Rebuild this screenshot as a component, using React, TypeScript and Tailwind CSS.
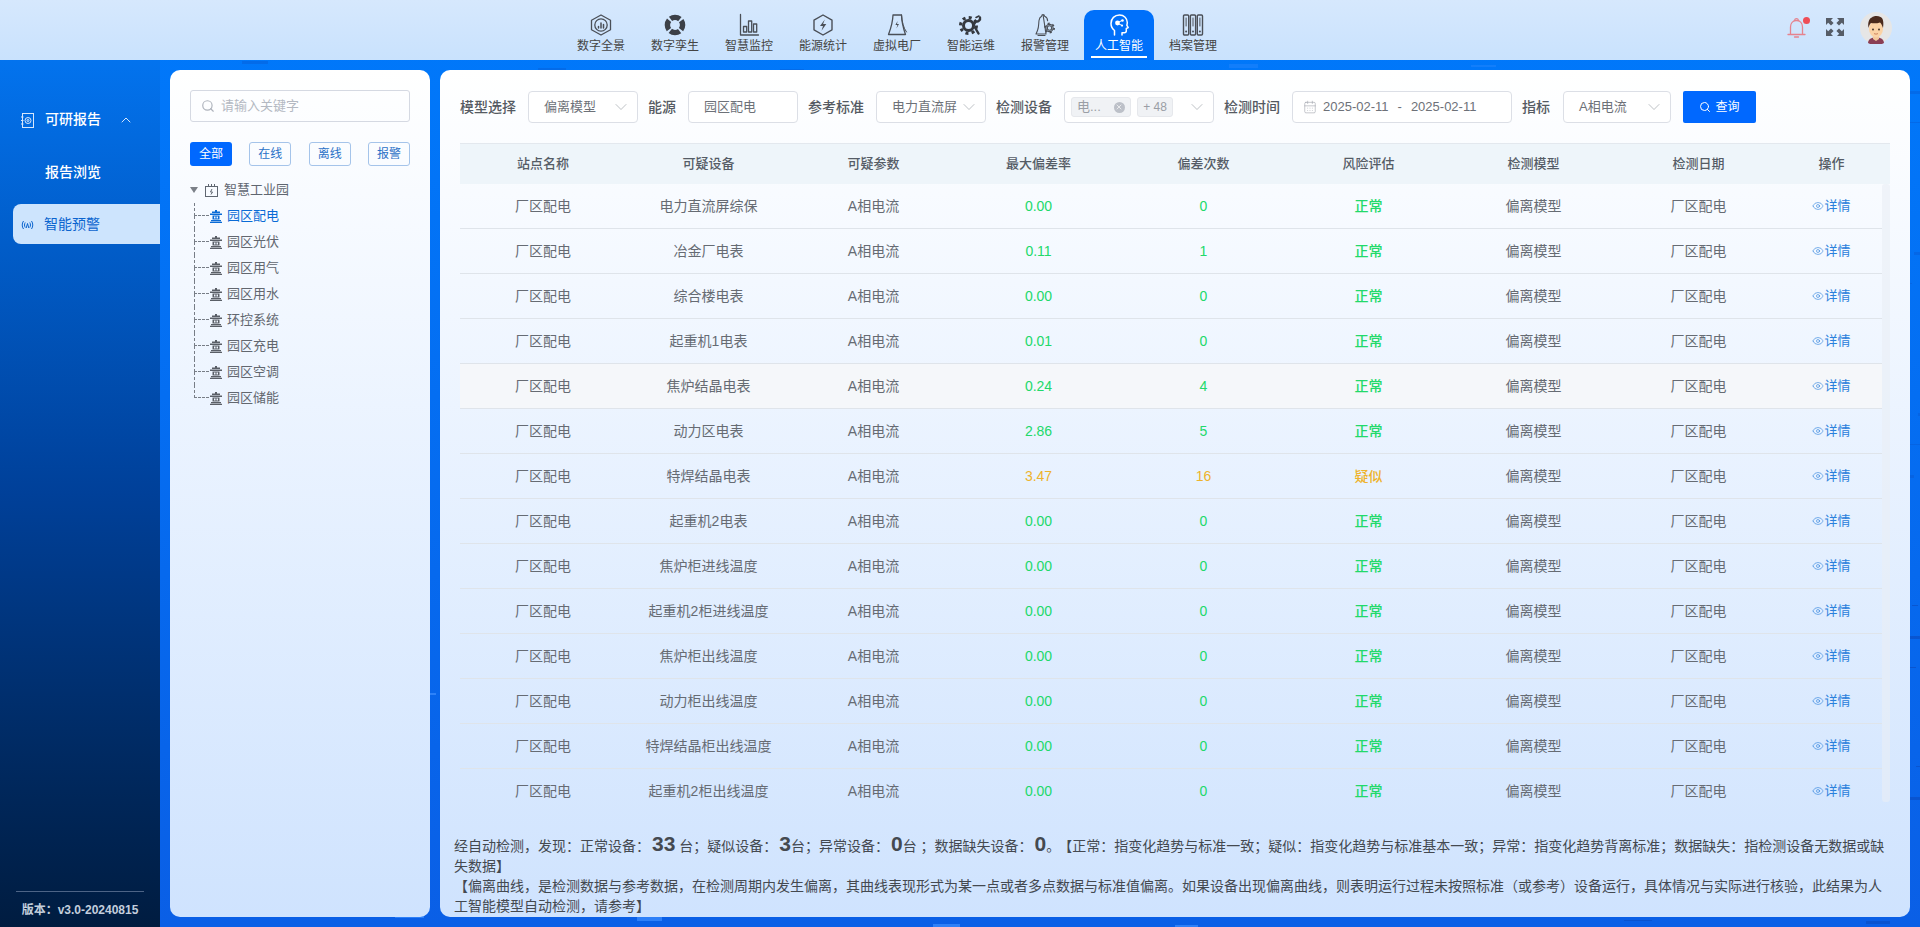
import { ChevronDown, ChevronUp, Search, Eye, CalendarDays, X } from "lucide-react";

const font = { fontFamily: '"Liberation Sans", "Noto Sans CJK SC", sans-serif' };

const stroke = "#4a4f57";

const NavIcon = ({ name, color = stroke }: { name: string; color?: string }) => {
  const common = { width: 24, height: 24, viewBox: "0 0 24 24", fill: "none", stroke: color, strokeWidth: 1.3, strokeLinejoin: "round" as const, strokeLinecap: "round" as const };
  switch (name) {
    case "overview":
      return (
        <svg {...common}>
          <path d="M12 2l9.500 5.200v9.600L12 22l-9.500-5.200V7.200z" />
          <circle cx="12" cy="12" r="6.200" />
          <path d="M9.500 13.500v1.500M12 10v5M14.500 11.500V15" strokeWidth="1.500" />
        </svg>
      );
    case "twin":
      return (
        <svg {...common}>
          <circle cx="12" cy="12" r="7.600" stroke="#3c4047" strokeWidth="5.400" strokeLinecap="butt" strokeDasharray="10 1.940" strokeDashoffset="5" />
        </svg>
      );
    case "monitor":
      return (
        <svg {...common}>
          <path d="M3.500 1.500v20.500h18" />
          <rect x="6.500" y="13.500" width="3.200" height="5.500" />
          <rect x="11.500" y="8" width="3.200" height="11" />
          <rect x="16.500" y="11" width="3.200" height="8" />
        </svg>
      );
    case "energy":
      return (
        <svg {...common}>
          <path d="M12 2l9 5.200v9.600L12 22l-9-5.200V7.200z" strokeWidth="1.400" />
          <path d="M13.800 6.500L9 13h3l-1.500 4.800L15.300 11h-3.200z" fill={color} stroke="none" />
        </svg>
      );
    case "plant":
      return (
        <svg {...common}>
          <path d="M8 2h8.500c.2 6 1.700 13 4 19.500H3.500C6 15 7.800 8 8 2z" />
          <path d="M16.500 2c.5 7 2 13 5 17" strokeWidth="1" />
          <path d="M12.600 8l-2.200 4h2l-1 3.600 2.600-4.600h-2z" fill={color} stroke="none" />
        </svg>
      );
    case "ops":
      return (
        <svg {...common}>
          <circle cx="9.500" cy="12.500" r="5" stroke="#34383e" strokeWidth="3" />
          <circle cx="9.500" cy="12.500" r="8" stroke="#34383e" strokeWidth="3" strokeLinecap="butt" strokeDasharray="3 3.280" />
          <path d="M21 4.500a3.200 3.200 0 0 1-4.200 3.800L14.500 12" stroke="#34383e" strokeWidth="2.400" />
          <path d="M16 14.500l3.500 6" stroke="#34383e" strokeWidth="2.400" />
          <path d="M17 4.500l3-1.500" stroke="#34383e" strokeWidth="1.600" />
        </svg>
      );
    case "alarm":
      return (
        <svg {...common} strokeWidth="1.100">
          <path d="M10 1.500c1 0 1.500.7 1.600 1.800 2 .8 3 2.200 3 4.400M13 21H3l1.500-3.500C6 14 5.500 11 6 7.500c.3-2 1.400-3.500 2.600-4.200.1-1.100.4-1.800 1.400-1.800z" />
          <path d="M5 22.500h7" />
          <circle cx="16.500" cy="15" r="2.200" />
          <circle cx="16.500" cy="15" r="4.600" strokeWidth="1.800" strokeLinecap="butt" strokeDasharray="2 2.820" />
          <circle cx="16.500" cy="15" r="3.600" />
        </svg>
      );
    case "ai":
      return (
        <svg {...common} strokeWidth="1.500">
          <path d="M7.500 22v-4.500C5 15.500 4 13.300 4 10.500 4 5.500 7.600 2 12.500 2c4.600 0 7.800 3.400 7.800 7.600 0 1-.2 1.800-.5 2.600l1.400 2.400-1.900.9v2.300c0 1.200-.8 2-2 2h-2.300V22" />
          <circle cx="10.500" cy="10" r="2.400" fill={color} stroke="none" />
          <circle cx="15.500" cy="7.500" r="1.300" fill={color} stroke="none" />
          <circle cx="15" cy="12.600" r="1.100" fill={color} stroke="none" />
          <path d="M11 9.500l4-2M11 10.500l4 2" strokeWidth="1" />
        </svg>
      );
    default:
      return (
        <svg {...common} strokeWidth="1.400">
          <rect x="2.500" y="2" width="5.200" height="20" rx="1" />
          <rect x="9.400" y="2" width="5.200" height="20" rx="1" />
          <rect x="16.300" y="2" width="5.200" height="20" rx="1" />
          <path d="M5.100 5v8M12 5v8M18.900 5v8" strokeWidth="1" />
          <circle cx="5.100" cy="18.500" r="1" fill={color} stroke="none" />
          <circle cx="12" cy="18.500" r="1" fill={color} stroke="none" />
          <circle cx="18.900" cy="18.500" r="1" fill={color} stroke="none" />
        </svg>
      );
  }
};

const navItems = [
  ["overview", "数字全景"],
  ["twin", "数字孪生"],
  ["monitor", "智慧监控"],
  ["energy", "能源统计"],
  ["plant", "虚拟电厂"],
  ["ops", "智能运维"],
  ["alarm", "报警管理"],
  ["ai", "人工智能"],
  ["files", "档案管理"],
];

const Header = () => (
  <div className="h-[60px] shrink-0 flex items-end bg-gradient-to-b from-[#d6e8fd] to-[#c9e2fd] relative z-10">
    <div className="flex ml-[564px]">
      {navItems.map(([icon, label]) => {
        const active = icon === "ai";
        return (
          <div key={label} className="w-[74px] flex justify-center">
            <div className={`w-[70px] h-[50px] flex flex-col items-center rounded-t-[10px] ${active ? "bg-[#0070fa] text-white" : "text-[#444]"}`}>
              <div className="h-[24px] mt-[3px] flex items-center justify-center">
                <NavIcon name={icon} color={active ? "#ffffff" : stroke} />
              </div>
              <span className="text-[12px] leading-[16px] mt-[1px]">{label}</span>
              {active && <div className="w-[56px] h-[2px] bg-white mt-[2px]" />}
            </div>
          </div>
        );
      })}
    </div>
    <div className="ml-auto mr-[28px] mb-[16px] flex items-center">
      <div className="relative mr-[19px]">
        <svg width="20" height="22" viewBox="0 0 20 22" fill="none" stroke="#e5838e" strokeWidth="1.300" strokeLinecap="round" className="block">
          <path d="M1 17.500h17M3.500 17.500V10c0-3.700 2.400-6.500 6-6.500s6 2.800 6 6.500v7.500" />
          <path d="M7.500 3.500c.3-1.200 1-1.800 2-1.800s1.700.6 2 1.800M7.500 20h4" />
        </svg>
        <span className="absolute top-[0px] -right-[3px] w-[7px] h-[7px] rounded-full bg-[#ee4d57]" />
      </div>
      <svg width="18" height="18" viewBox="0 0 18 18" fill="#565c66" className="mr-[16px] -mt-[2px]">
        <path d="M0 0h7L4.800 2.200 7.600 5 5 7.600 2.200 4.800 0 7zM18 0v7l-2.200-2.200L13 7.600 10.400 5l2.800-2.800L11 0zM0 18v-7l2.200 2.200L5 10.400 7.600 13l-2.800 2.800L7 18zM18 18h-7l2.200-2.200-2.800-2.800 2.600-2.600 2.800 2.800L18 11z" />
      </svg>
      <svg width="32" height="32" viewBox="0 0 32 32">
        <circle cx="16" cy="16" r="16" fill="#e6e6e6" />
        <path d="M8 31c.5-4 3-5.500 8-5.500s7.500 1.500 8 5.500l-2 1H10z" fill="#8a3f55" />
        <path d="M13 24h6v3l-3 2-3-2z" fill="#f2c79c" />
        <ellipse cx="16" cy="17" rx="7" ry="8.500" fill="#fbd3a6" />
        <path d="M8.500 16c-1-6 1-10 3.500-10.500 1-1.500 6-2 8.500-.5 2.500 1 3.500 5 2.500 11-1-2.500-1.500-4.500-3-5.500-3 1-6.500 1-9 .5-1.500 1-2 3-2.500 5z" fill="#4a2a1c" />
        <circle cx="13" cy="17.500" r=".9" fill="#3a2a20" />
        <circle cx="19" cy="17.500" r=".9" fill="#3a2a20" />
        <path d="M14 21.500c1.200.8 2.800.8 4 0" stroke="#c0714f" strokeWidth=".8" fill="none" />
      </svg>
    </div>
  </div>
);

const Sidebar = () => (
  <div className="w-[160px] shrink-0 flex flex-col bg-gradient-to-b from-[#0373ee] via-[#004099] to-[#001c40] text-white relative z-10">
    <div className="flex-1 pt-[39px]">
      <div className="h-[40px] flex items-center pl-[21px] text-[14px] font-medium">
        <svg width="13" height="15" viewBox="0 0 13 15" fill="none" stroke="#d6e6fb" strokeWidth="1" className="mr-[11px] mt-[2px]">
          <rect x="1.500" y=".5" width="11" height="14" />
          <circle cx="7" cy="7.500" r="3" />
          <circle cx="7" cy="7.500" r="1" />
          <path d="M0 4h2.500M0 7.500h2.500M0 11h2.500" />
        </svg>
        <span>可研报告</span>
        <ChevronUp size={16} strokeWidth={1.500} className="ml-[17px] mt-[2px] text-[#d6e6fb]" />
      </div>
      <div className="h-[40px] mt-[13px] flex items-center pl-[45px] text-[14px] font-medium">报告浏览</div>
      <div className="h-[40px] mt-[12px] ml-[13px] flex items-center pl-[8px] rounded-l-[8px] bg-[#cde4fd] text-[#0b64cf] text-[14px]">
        <svg width="13" height="10" viewBox="0 0 13 10" fill="none" stroke="#0b64cf" strokeWidth="1" className="mr-[10px] mt-[2px]">
          <path d="M2.500 1C.8 3.500.8 6.500 2.500 9M10.500 1c1.700 2.500 1.700 5.500 0 8M4.200 2.500c-.9 1.500-.9 3.500 0 5M8.800 2.500c.9 1.500.9 3.500 0 5" />
          <path d="M5.200 8l1.300-4.500L7.800 8" />
        </svg>
        <span>智能预警</span>
      </div>
    </div>
    <div className="mx-[16px] border-t border-[#4d6486] h-[36px] flex items-center justify-center text-[12px] font-bold text-[#c3cedd]">
      版本：v3.0-20240815
    </div>
  </div>
);

const TowerIcon = ({ color }: { color: string }) => (
  <svg width="12" height="13" viewBox="0 0 12 13" fill={color}>
    <path d="M5 0h2v1.500h3V3H2V1.500h3zM0 3.500h12V5H0zM2.500 5.500h7v4h-7zM1 10h10v1.300H1zM0 11.700h12V13H0z" />
    <path d="M4 6.500h1.500v2H4zM6.500 6.500H8v2H6.500z" fill="#f0f6ff" />
  </svg>
);

const treeItems = ["园区配电", "园区光伏", "园区用气", "园区用水", "环控系统", "园区充电", "园区空调", "园区储能"];

const TreePanel = () => (
  <div className="w-[260px] h-[847px] mt-[10px] ml-[10px] rounded-[10px] bg-gradient-to-b from-white to-[#cfe3fe] px-[20px] pt-[20px] shrink-0">
    <div className="h-[32px] w-[220px] border border-[#d5d9e2] rounded-[3px] flex items-center pl-[10px] text-[13px] text-[#b4b9c2]">
      <Search size={14} className="mr-[6px] text-[#aeb3bc]" />
      请输入关键字
    </div>
    <div className="mt-[20px] flex justify-between w-[220px] text-[12px]">
      {["全部", "在线", "离线", "报警"].map((t, i) => (
        <div
          key={t}
          className={`w-[42px] h-[24px] rounded-[3px] flex items-center justify-center ${i === 0 ? "bg-[#0068ff] text-white" : "border border-[#a5c4ea] text-[#2a71c7]"}`}
        >
          {t}
        </div>
      ))}
    </div>
    <div className="mt-[11px] h-[26px] flex items-center text-[13px] text-[#5f6670]">
      <div className="w-0 h-0 border-x-[4.500px] border-x-transparent border-t-[6px] border-t-[#7b8088] mr-[7px]" />
      <svg width="13" height="13" viewBox="0 0 13 13" fill="none" stroke="#5f6670" strokeWidth="1" className="mr-[6px]">
        <rect x=".5" y="2.500" width="12" height="10" />
        <path d="M3.500 0v3M6.500 0v3M9.500 0v3" />
        <path d="M7 5L5.500 8h2L6 10.500" />
      </svg>
      智慧工业园
    </div>
    <div className="ml-[4px]">
      {treeItems.map((t, i) => (
        <div key={t} className={`h-[26px] flex items-center text-[13px] ${i === 0 ? "text-[#0a6bd6]" : "text-[#62676f]"}`}>
          <div className="w-[15px] h-[26px] flex flex-col">
            <div className="h-[13px] border-l border-b border-dashed border-[#777d86]" />
            {i < treeItems.length - 1 && <div className="h-[13px] border-l border-dashed border-[#777d86]" />}
          </div>
          <div className="ml-[1px] mr-[5px] flex">
            <TowerIcon color={i === 0 ? "#0a6bd6" : "#5a5f67"} />
          </div>
          {t}
        </div>
      ))}
    </div>
  </div>
);

const Field = ({ w, text, chevron = true }: { w: string; text: string; chevron?: boolean }) => (
  <div className={`${w} h-[32px] border border-[#dcdfe6] rounded-[4px] bg-white flex items-center pl-[15px] pr-[6px] text-[13px] text-[#6d7178] justify-between`}>
    <span className="whitespace-nowrap">{text}</span>
    {chevron && <ChevronDown size={20} strokeWidth={0.8} className="text-[#9ca1a8] shrink-0" />}
  </div>
);

const Label = ({ text, cls }: { text: string; cls: string }) => (
  <span className={`text-[14px] font-medium text-[#555a62] whitespace-nowrap ${cls}`}>{text}</span>
);

const Filters = () => (
  <div className="h-[32px] flex items-center">
    <Label text="模型选择" cls="mr-[12px]" />
    <Field w="w-[110px]" text="偏离模型" />
    <Label text="能源" cls="ml-[10px] mr-[12px]" />
    <Field w="w-[110px]" text="园区配电" chevron={false} />
    <Label text="参考标准" cls="ml-[10px] mr-[12px]" />
    <Field w="w-[110px]" text="电力直流屏" />
    <Label text="检测设备" cls="ml-[10px] mr-[12px]" />
    <div className="w-[150px] h-[32px] border border-[#dcdfe6] rounded-[4px] bg-white flex items-center pl-[6px] pr-[6px] text-[13px] text-[#9a9ea5]">
      <div className="w-[60px] h-[20px] bg-[#f0f2f5] border border-[#e6e8ec] rounded-[3px] flex items-center pl-[5px]">
        <span>电...</span>
        <span className="ml-[13px] w-[11px] h-[11px] rounded-full bg-[#bcc0c8] flex items-center justify-center text-white">
          <X size={8} strokeWidth={2} />
        </span>
      </div>
      <div className="w-[36px] h-[20px] ml-[6px] bg-[#f0f2f5] border border-[#e6e8ec] rounded-[3px] flex items-center justify-center text-[12px]">+ 48</div>
      <ChevronDown size={20} strokeWidth={0.8} className="ml-auto text-[#9ca1a8]" />
    </div>
    <Label text="检测时间" cls="ml-[10px] mr-[12px]" />
    <div className="w-[220px] h-[32px] border border-[#dcdfe6] rounded-[4px] bg-white flex items-center pl-[10px] text-[13px] text-[#6d7178]">
      <CalendarDays size={14} strokeWidth={1} className="text-[#9ca1a8] mr-[6px]" />
      <span>2025-02-11</span>
      <span className="mx-[9px]">-</span>
      <span>2025-02-11</span>
    </div>
    <Label text="指标" cls="ml-[10px] mr-[13px]" />
    <Field w="w-[108px]" text="A相电流" />
    <div className="ml-[12px] w-[73px] h-[32px] rounded-[2px] bg-[#0068ff] text-white text-[12px] flex items-center justify-center">
      <Search size={12} className="mr-[4px]" />
      查询
    </div>
  </div>
);

const columns = ["站点名称", "可疑设备", "可疑参数", "最大偏差率", "偏差次数", "风险评估", "检测模型", "检测日期", "操作"];

const rows: [string, string, string, string][] = [
  ["电力直流屏综保", "0.00", "0", "正常"],
  ["冶金厂电表", "0.11", "1", "正常"],
  ["综合楼电表", "0.00", "0", "正常"],
  ["起重机1电表", "0.01", "0", "正常"],
  ["焦炉结晶电表", "0.24", "4", "正常"],
  ["动力区电表", "2.86", "5", "正常"],
  ["特焊结晶电表", "3.47", "16", "疑似"],
  ["起重机2电表", "0.00", "0", "正常"],
  ["焦炉柜进线温度", "0.00", "0", "正常"],
  ["起重机2柜进线温度", "0.00", "0", "正常"],
  ["焦炉柜出线温度", "0.00", "0", "正常"],
  ["动力柜出线温度", "0.00", "0", "正常"],
  ["特焊结晶柜出线温度", "0.00", "0", "正常"],
  ["起重机2柜出线温度", "0.00", "0", "正常"],
];

const gridCols = "grid grid-cols-[166px_repeat(7,165px)_101px]";

const Table = () => (
  <div className="mt-[20px] w-[1430px]">
    <div className={`h-[41px] bg-[#eef5fa] border-t border-[#e3e8ee] items-center text-center text-[13px] font-medium text-[#555c66] ${gridCols}`}>
      {columns.map((c) => (
        <div key={c}>{c}</div>
      ))}
    </div>
    <div className="h-[618px] overflow-hidden flex">
      <div className="w-[1422px] shrink-0">
        {rows.map((r, i) => {
          const warn = r[3] === "疑似";
          const tone = warn ? "text-[#eeb32c]" : "text-[#22d96a]";
          return (
            <div key={r[0]} className={`h-[45px] items-center text-center text-[14px] text-[#666b73] border-b border-[#dfe4ea] ${gridCols} ${i === 4 ? "bg-[#f5f7fa]" : ""}`}>
              <div>厂区配电</div>
              <div>{r[0]}</div>
              <div>A相电流</div>
              <div className={tone}>{r[1]}</div>
              <div className={tone}>{r[2]}</div>
              <div className={`${tone} font-medium`}>{r[3]}</div>
              <div>偏离模型</div>
              <div>厂区配电</div>
              <div className="flex items-center justify-center text-[#2a80dc] text-[13px]">
                <Eye size={12} strokeWidth={1.200} />
                详情
              </div>
            </div>
          );
        })}
      </div>
      <div className="w-[8px] bg-[#e9eef5]/60 rounded-[3px]" />
    </div>
  </div>
);

const Big = ({ children }: { children: React.ReactNode }) => (
  <span className="text-[21px] font-bold leading-[24px] ml-[2px]">{children}</span>
);

const Notes = () => (
  <div className="mt-[30px] w-[1440px] -ml-[6px] text-[14px] leading-[20px] text-[#444950]">
    <p>
      经自动检测，发现：正常设备：<Big>33</Big> 台；疑似设备：<Big>3</Big>台；异常设备：<Big>0</Big>台 ；数据缺失设备：<Big>0</Big>。
      <span className="ml-[5px]">【正常：指变化趋势与标准一致；疑似：指变化趋势与标准基本一致；异常：指变化趋势背离标准；数据缺失：指检测设备无数据或缺失数据】</span>
    </p>
    <p>
      【偏离曲线，是检测数据与参考数据，在检测周期内发生偏离，其曲线表现形式为某一点或者多点数据与标准值偏离。如果设备出现偏离曲线，则表明运行过程未按照标准（或参考）设备运行，具体情况与实际进行核验，此结果为人工智能模型自动检测，请参考】
    </p>
  </div>
);

const MainPanel = () => (
  <div className="w-[1470px] h-[847px] mt-[10px] ml-[10px] rounded-[10px] bg-gradient-to-b from-white to-[#cfe3fe] pl-[20px] pt-[21px] shrink-0 relative z-10">
    <Filters />
    <Table />
    <Notes />
  </div>
);

// faint circuit-board texture behind the panels
const Texture = () => {
  const bits = [];
  for (let i = 0; i < 420; i++) {
    const x = (i * 137) % 1920;
    const y = 60 + ((i * 211) % 867);
    const w = 4 + ((i * 7) % 26);
    const h = 1 + ((i * 3) % 4);
    bits.push(<rect key={i} x={x} y={y} width={w} height={h} fill={i % 2 ? "#3d8fff" : "#0a4fc4"} opacity={y > 500 ? 0.7 : 0.3} />);
  }
  return (
    <svg width="1920" height="927" className="absolute inset-0">
      {bits}
    </svg>
  );
};

export default function App() {
  return (
    <div className="relative w-[1920px] h-[927px] overflow-hidden flex flex-col bg-gradient-to-b from-[#0079fb] to-[#0a5fe6]" style={font}>
      <Texture />
      <Header />
      <div className="flex flex-1">
        <Sidebar />
        <div className="relative z-10 flex">
          <TreePanel />
        </div>
        <MainPanel />
      </div>
    </div>
  );
}
